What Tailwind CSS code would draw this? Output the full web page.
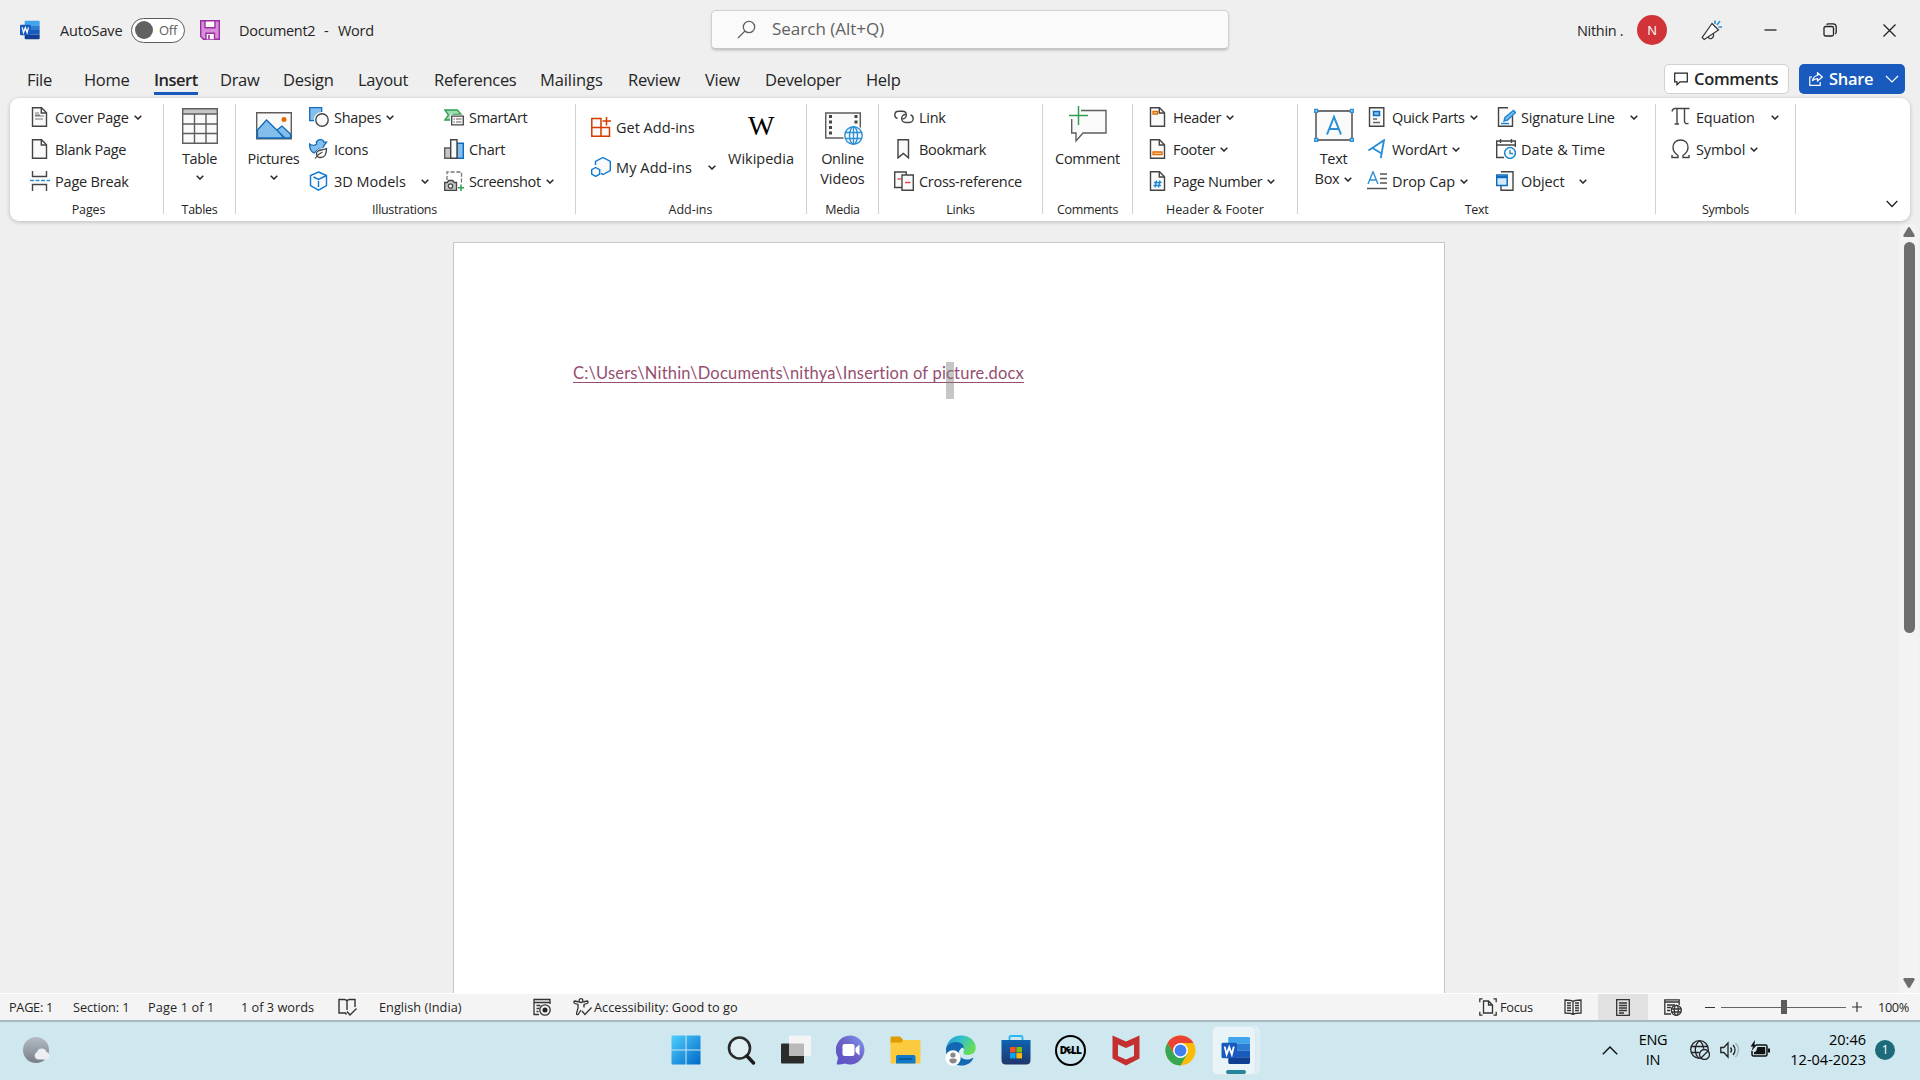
<!DOCTYPE html>
<html lang="en">
<head>
<meta charset="utf-8">
<title>Document2 - Word</title>
<script src="https://cdn.jsdelivr.net/npm/@tailwindcss/browser@4"></script>
</head>
<body class="w-[1920px] h-[1080px] overflow-hidden flex flex-col bg-[#efefef] font-['Open_Sans',sans-serif] text-[#252525] text-[14.5px] leading-5 tracking-[-0.3px] whitespace-nowrap">

<svg class="hidden">
  <symbol id="chev" viewBox="0 0 8 5"><path d="M.7.7 4 4 7.3.7" fill="none" stroke="#252525" stroke-width="1.5"/></symbol>
  <symbol id="page" viewBox="0 0 20 20"><path d="M2.5.8h9l5 5v13.4h-14z" fill="#fafafa" stroke="#444" stroke-width="1.4"/><path d="M11.3 1v5h5" fill="none" stroke="#444" stroke-width="1.4"/></symbol>
  <symbol id="word" viewBox="0 0 30 30">
    <path d="M8 1h20a1.5 1.5 0 0 1 1.500 1.500V8H7V2a1 1 0 0 1 1-1z" fill="#41a5ee"/><path d="M7 8h22.500v7H7z" fill="#2b7cd3"/><path d="M7 15h22.500v7H7z" fill="#185abd"/><path d="M7 22h22.500v5.500A1.500 1.500 0 0 1 28 29H8.500A1.500 1.500 0 0 1 7 27.500z" fill="#103f91"/>
    <rect x="0" y="7" width="16" height="16" rx="1.500" fill="#185abd"/><path d="m3.300 11 2 8L8 11.500l2.700 7.500 2-8" fill="none" stroke="#fff" stroke-width="1.900"/></symbol>
</svg>

<!-- Title bar -->
<header class="h-15 shrink-0 flex items-center relative">
  <svg class="ml-5 size-5"><use href="#word"/></svg>
  <span class="ml-5 w-[71px] pt-px tracking-[-0.1px]">AutoSave</span>
  <div class="w-[54px] h-[25px] rounded-full border border-[#5c5c5c] bg-white flex items-center pl-[3px] text-[#5c5c5c] text-[13px]"><i class="size-[18px] rounded-full bg-[#616161] mr-[6px]"></i><span>Off</span></div>
  <svg class="ml-[15px] size-5" viewBox="0 0 20 20"><path d="M.7.7h18.600v18.600H3.500L.7 16.500z" fill="#d98ddb" stroke="#9b2fa0" stroke-width="1.400"/><path d="M5 .7h10v7H5zM6 19.300v-6h8.500v6" fill="#fafafa" stroke="#9b2fa0" stroke-width="1.400"/><path d="M9 15v4" stroke="#9b2fa0" stroke-width="1.600"/></svg>
  <span class="ml-[19px] w-[85px] pt-px">Document2</span><span class="w-[14px] pt-px">-</span><span class="pt-px">Word</span>
  <div class="absolute left-[711px] top-[10px] w-[518px] h-10 rounded-[5px] bg-[#fafafa] border border-[#d0d0d0] border-b-2 border-b-[#c6c6c6] shadow-sm flex items-center pl-[25px] pb-px text-[#616161] text-[17px]">
    <svg class="size-[19px] mr-4" viewBox="0 0 19 19" fill="none" stroke="#616161" stroke-width="1.300"><circle cx="12" cy="7" r="5.700"/><path d="m8 11-7 7"/></svg><span class="tracking-[0px]">Search (Alt+Q)</span>
  </div>
  <span class="ml-auto w-[60px] pt-px">Nithin .</span>
  <div class="size-[30px] rounded-full bg-[#d13438] text-white text-[13px] flex items-center justify-center">N</div>
  <svg class="ml-[34px] size-[21px]" viewBox="0 0 21 21" fill="none" stroke="#333" stroke-width="1.200"><path d="M11 3.500 1.200 17.500l2 2L17.500 10z" fill="#fafafa"/><path d="m7 17.200 1.500 1.300c1.500.8 3.500-.5 4-2.500v-2.500"/><path d="M14 4V.5M16 5l3-4M17.500 7h3.500M14.500 3l-1-2" stroke="#2b8fd6" stroke-width="1.500"/></svg>
  <svg class="ml-[42px] size-[13px]" viewBox="0 0 13 13"><path d="M.5 6h12" stroke="#222" stroke-width="1.300"/></svg>
  <svg class="ml-[46px] size-[14px]" viewBox="0 0 14 14" fill="none" stroke="#222" stroke-width="1.300"><rect x="1" y="3.500" width="9.500" height="9.500" rx="1.500"/><path d="M3.500 1.500C4 1 4.500.8 5.500.8H10A3.200 3.200 0 0 1 13.200 4v5c0 1-.2 1.500-1 2"/></svg>
  <svg class="ml-[46px] mr-6 size-[13px]" viewBox="0 0 13 13"><path d="m.5.5 12 12m0-12-12 12" stroke="#222" stroke-width="1.300"/></svg>
</header>

<!-- Ribbon tabs -->
<nav class="h-[38px] shrink-0 flex items-start pl-[27px] pt-[8px] text-[16.5px] leading-6">
  <span class="w-[57px]">File</span><span class="w-[70px]">Home</span>
  <span class="w-[44px] mr-[22px] h-[27px] border-b-3 border-[#185abd] font-semibold tracking-[-0.5px]">Insert</span>
  <span class="w-[63px]">Draw</span><span class="w-[75px]">Design</span><span class="w-[76px]">Layout</span><span class="w-[106px]">References</span><span class="w-[88px] tracking-[-0.1px]">Mailings</span><span class="w-[77px]">Review</span><span class="w-[60px]">View</span><span class="w-[101px]">Developer</span><span>Help</span>
  <div class="-mt-1 ml-auto w-[125px] h-[30px] rounded-[5px] border border-[#d1d1d1] bg-white flex items-center pl-[9px] font-semibold">
    <svg class="size-[14px] mr-[6px]" viewBox="0 0 14 14"><path d="M.7 1.200h12.600v8.600H6L3 12.800v-3H.7z" fill="none" stroke="#222" stroke-width="1.200"/></svg><span>Comments</span></div>
  <div class="-mt-1 ml-[10px] mr-[15px] w-[106px] h-[30px] rounded-[5px] bg-[#185abd] text-white flex items-center pl-[10px] font-semibold">
    <svg class="size-[14px] mr-[6px]" viewBox="0 0 14 14" fill="none" stroke="#fff" stroke-width="1.200"><path d="M3 5H.8v8.300h10.400V10M8.500.8 13.300 5 8.500 9V6.700C6 6.700 4.500 7.500 3.500 9c.3-3 2-5 5-5.500z"/></svg><span class="w-[56px]">Share</span>
    <svg class="w-[14px] h-2" viewBox="0 0 14 8"><path d="m1 1 6 6 6-6" fill="none" stroke="#fff" stroke-width="1.200"/></svg></div>
</nav>

<!-- Ribbon -->
<section class="mx-[10px] h-[123px] shrink-0 rounded-[9px] bg-white shadow-[0_1px_4px_rgba(0,0,0,0.22)] flex relative [&_.h-8_span]:pt-[2px] [&_.h-10_span]:pt-[2px]">
  <div class="w-[153px] pt-[3px]">
    <div class="h-24 pl-5 flex flex-col">
      <div class="h-8 flex items-center gap-[5px]"><svg class="size-5" viewBox="0 0 20 20"><use href="#page"/><path d="M5 6h4M5 9h9M5 12h8M5 8h5" stroke="#777" stroke-width="1.200"/></svg><span class="tracking-[-0.2px]">Cover Page</span><svg class="w-2 h-[5px]"><use href="#chev"/></svg></div>
      <div class="h-8 flex items-center gap-[5px]"><svg class="size-5"><use href="#page"/></svg><span>Blank Page</span></div>
      <div class="h-8 flex items-center gap-[5px]"><svg class="size-5" viewBox="0 0 20 20" fill="#fafafa" stroke="#444" stroke-width="1.400"><path d="M2.500 0v5.500h14V0M2.500 20v-6.500h14V20"/><path d="M0 9.500h20" stroke="#2b8fd6" stroke-dasharray="4 1.500"/></svg><span class="tracking-[-0.2px]">Page Break</span></div>
    </div>
    <div class="h-6 leading-[26px] text-center text-[12.500px] pl-[4px]"><span class="tracking-[-0.1px]">Pages</span></div>
  </div>
  <i class="w-px h-[110px] mt-[6px] bg-[#d1d1d1]"></i>
  <div class="w-[71px] pt-[3px]">
    <div class="h-24 flex flex-col items-center pt-[7px]"><svg class="size-9" viewBox="0 0 36 36"><path d="M.7.700h34.600v34.600H.7z" fill="#fafafa"/><path d="M.7.700h34.600V6H.7z" fill="#c8c6c4"/><path d="M.7.700h34.600v34.600H.7zM.7 6h34.600M.7 16h34.600M.7 25.500h34.600M12.500 6v29M24 6v29" fill="none" stroke="#605e5c" stroke-width="1.400"/></svg><span class="mt-[5px]">Table</span><svg class="mt-[6px] w-2 h-[5px]"><use href="#chev"/></svg></div>
    <div class="h-6 leading-[26px] text-center text-[12.500px]"><span>Tables</span></div>
  </div>
  <i class="w-px h-[110px] mt-[6px] bg-[#d1d1d1]"></i>
  <div class="w-[339px] pt-[3px]">
    <div class="h-24 flex">
      <div class="w-[73px] pl-[2px] flex flex-col items-center pt-[7px]"><svg class="size-9" viewBox="0 0 36 36"><path d="M.7 4.700h34.600v26H.7z" fill="#fafafa" stroke="#605e5c" stroke-width="1.400"/><path d="M1.500 22 10.500 12 29 30H1.500zM21 22l5-4 8.500 8v4H28z" fill="#83beec" stroke="#0f6cbd" stroke-width="1.300"/><circle cx="28" cy="11.500" r="2.500" fill="#e36b00"/></svg><span class="mt-[5px]">Pictures</span><svg class="mt-[6px] w-2 h-[5px]"><use href="#chev"/></svg></div>
      <div class="w-[135px] flex flex-col">
        <div class="h-8 flex items-center gap-[5px]"><svg class="size-5" viewBox="0 0 20 20"><path d="M.7.700h12v13h-12z" fill="#83beec" stroke="#0f6cbd" stroke-width="1.300"/><circle cx="13" cy="13" r="8" fill="#fff"/><circle cx="13" cy="13" r="6.200" fill="#fafafa" stroke="#444" stroke-width="1.400"/></svg><span>Shapes</span><svg class="w-2 h-[5px]"><use href="#chev"/></svg></div>
        <div class="h-8 flex items-center gap-[5px]"><svg class="size-5" viewBox="0 0 20 20"><path d="M.7 5c2 1.500 5 1.500 7 0C6.500 2.500 9 .700 11.500.700c2 0 3 1 3.500 2.500h2.500L15 6.500C15 9 12 10 10 10l-5 4C1.500 12.500.500 9 .700 5z" fill="#83beec" stroke="#0f6cbd" stroke-width="1.300"/><path d="M18.500 9.500c0 6-2 9-6 9-2 0-4-1-4-3.500 0-5 5-3 10-5.500z" fill="#fafafa" stroke="#fff" stroke-width="3.500"/><path d="M17.500 9.500c0 6-1.500 9-6 9-2 0-4-1-4-3.500 0-5 5-3 10-5.500zM6 19.500c2-3 4-5 7.500-6.500" fill="#fafafa" stroke="#444" stroke-width="1.300"/></svg><span>Icons</span></div>
        <div class="h-8 flex items-center gap-[5px]"><svg class="size-5" viewBox="0 0 20 20" fill="none" stroke="#0f78d4" stroke-width="1.400"><path d="m9.500 1 8 3.500v10l-8 4.700-8-4.700v-10z" fill="#fafafa"/><path d="m4.500 6 5 2.500 8-4M9.500 10v6"/></svg><span class="tracking-[0px]">3D Models</span><svg class="ml-[10px] w-2 h-[5px]"><use href="#chev"/></svg></div>
      </div>
      <div class="flex flex-col">
        <div class="h-8 flex items-center gap-[5px]"><svg class="size-5" viewBox="0 0 20 20"><path d="M.8 3h12.500l4 4.500h-8L8 13H.8L4.500 8z" fill="#a1dbb4" stroke="#2e9e4f" stroke-width="1.300"/><path d="M7.700 9.200h11.600v8.600H7.700z" fill="#fafafa" stroke="#fff" stroke-width="3"/><path d="M7.700 9.200h11.600v8.600H7.700z" fill="#fafafa" stroke="#444" stroke-width="1.300"/><path d="M9.500 12h1.500m1 0h5.500M9.500 15h1.500m1 0h5.500" stroke="#666"/></svg><span>SmartArt</span></div>
        <div class="h-8 flex items-center gap-[5px]"><svg class="size-5" viewBox="0 0 20 20" stroke-width="1.400"><path d="M.7 9h6v10.300h-6z" fill="#c8c6c4" stroke="#605e5c"/><path d="M13 4.200h6.300v15.100H13z" fill="#83beec" stroke="#0f6cbd"/><path d="M6.700.700H13v18.600H6.700z" fill="#fafafa" stroke="#444"/></svg><span class="tracking-[-0.2px]">Chart</span></div>
        <div class="h-8 flex items-center gap-[5px]"><svg class="size-5" viewBox="0 0 20 20" fill="none"><path d="M3 9V1h14.500v11" stroke="#777" stroke-width="1.300" stroke-dasharray="4 1.800"/><path d="M.7 11.500h2.500l1.500-2h4l1.500 2h2.300v7.800H.7z" fill="#c8c6c4" stroke="#444" stroke-width="1.300"/><circle cx="6.500" cy="15" r="2.200" fill="#fafafa" stroke="#444" stroke-width="1.300"/><path d="M17 13.500v6.500M13.800 16.700H20" stroke="#2e9e4f" stroke-width="1.500"/></svg><span class="tracking-[-0.4px]">Screenshot</span><svg class="w-2 h-[5px]"><use href="#chev"/></svg></div>
      </div>
    </div>
    <div class="h-6 leading-[26px] text-center text-[12.500px] pr-[2px]"><span>Illustrations</span></div>
  </div>
  <i class="w-px h-[110px] mt-[6px] bg-[#d1d1d1]"></i>
  <div class="w-[230px] pt-[3px]">
    <div class="h-24 flex pl-[15px]">
      <div class="w-[135px] flex flex-col pt-[6px]">
        <div class="h-10 flex items-center gap-[5px]"><svg class="size-5" viewBox="0 0 20 20" fill="#fafafa" stroke="#d83b01" stroke-width="1.500"><path d="M.8 1.500H10v9H.8zM.8 10.500H10v8.700H.8zM10 10.500h8.500v8.700H10z"/><path d="M15.500 0v8.500M11.500 4H20"/></svg><span class="tracking-[0px]">Get Add-ins</span></div>
        <div class="h-10 flex items-center gap-[5px]"><svg class="size-5" viewBox="0 0 20 20" fill="#fafafa" stroke="#0f78d4" stroke-width="1.400"><path d="M4.500 8V4.500l7.500-4 7.300 4v9l-7.300 4-2-1"/><path d="m4.700 10.500 4 2.200v4.500l-4 2.200-4-2.200v-4.500z"/></svg><span class="tracking-[0.1px]">My Add-ins</span><svg class="ml-[11px] w-2 h-[5px]"><use href="#chev"/></svg></div>
      </div>
      <div class="w-[70px] flex flex-col items-center pt-[7px]"><span class="h-9 leading-[36px] text-[28px] text-black font-['Liberation_Serif',serif]">W</span><span class="mt-[5px] tracking-[0px]">Wikipedia</span></div>
    </div>
    <div class="h-6 leading-[26px] text-center text-[12.500px] pr-px"><span class="tracking-[0px]">Add-ins</span></div>
  </div>
  <i class="w-px h-[110px] mt-[6px] bg-[#d1d1d1]"></i>
  <div class="w-[71px] pt-[3px]">
    <div class="h-24 flex flex-col items-center pt-[9px]"><svg class="ml-[3px] w-[38px] h-[35px]" viewBox="0 0 38 35"><path d="M.7 3h34.600v25H.7z" fill="#fafafa" stroke="#605e5c" stroke-width="1.500"/><path d="M5.500 5v22M31 5v12" stroke="#444" stroke-width="3" stroke-dasharray="3 2.500"/><circle cx="28.500" cy="25.500" r="10.500" fill="#fff"/><g fill="none" stroke="#2b8fd6" stroke-width="1.400"><circle cx="28.500" cy="25.500" r="8.700" fill="#fafafa"/><ellipse cx="28.500" cy="25.500" rx="4" ry="8.700"/><path d="M28.500 17v17M20.500 22.500h16M20.500 28.500h16"/></g></svg><span class="mt-1">Online</span><span class="tracking-[-0.1px]">Videos</span></div>
    <div class="h-6 leading-[26px] text-center text-[12.500px]"><span>Media</span></div>
  </div>
  <i class="w-px h-[110px] mt-[6px] bg-[#d1d1d1]"></i>
  <div class="w-[163px] pt-[3px]">
    <div class="h-24 pl-[15px] flex flex-col">
      <div class="h-8 flex items-center gap-[5px]"><svg class="size-5" viewBox="0 0 20 20" fill="none" stroke="#444" stroke-width="1.400"><path d="M3.500 11.500C1.500 11 .800 9.500.800 8c0-2 1.500-3.700 4-3.700h3.500c2.500 0 4 1.700 4 3.700s-1.500 4-4 4"/><path d="M16.500 8c2 .500 2.700 2 2.700 3.500 0 2-1.500 4-4 4h-3.500c-2.500 0-4-2-4-4s1.500-4 4-4"/></svg><span>Link</span></div>
      <div class="h-8 flex items-center gap-[5px]"><svg class="size-5" viewBox="0 0 20 20"><path d="M4 .700h10.500v18.200L9.300 14.500 4 18.900z" fill="#fafafa" stroke="#444" stroke-width="1.400"/></svg><span>Bookmark</span></div>
      <div class="h-8 flex items-center gap-[5px]"><svg class="size-5" viewBox="0 0 20 20"><path d="M.7 1h11.500v15.500H.7z" fill="#fafafa" stroke="#444" stroke-width="1.400"/><path d="M3.500 8h3.500" stroke="#e8484a" stroke-width="1.400"/><path d="M8 4h11.300v15.300H8z" fill="#fafafa" stroke="#444" stroke-width="1.400"/><path d="M11 11.500h5.500" stroke="#e8484a" stroke-width="1.500"/></svg><span>Cross-reference</span></div>
    </div>
    <div class="h-6 leading-[26px] text-center text-[12.500px]"><span>Links</span></div>
  </div>
  <i class="w-px h-[110px] mt-[6px] bg-[#d1d1d1]"></i>
  <div class="w-[89px] pt-[3px]">
    <div class="h-24 flex flex-col items-center pt-[5px]"><svg class="w-[38px] h-[38px]" viewBox="0 0 38 38" fill="none"><path d="M12 4.500h25v22.500H14l-7 8V27H2.700V13" fill="#fafafa" stroke="#605e5c" stroke-width="1.400"/><path d="M9.500 0v19M0 9.500h19" stroke="#fff" stroke-width="4"/><path d="M9.500 0v19M0 9.500h19" stroke="#2e9e4f" stroke-width="1.500"/></svg><span class="mt-[5px]">Comment</span></div>
    <div class="h-6 leading-[26px] text-center text-[12.500px]"><span>Comments</span></div>
  </div>
  <i class="w-px h-[110px] mt-[6px] bg-[#d1d1d1]"></i>
  <div class="w-[164px] pt-[3px]">
    <div class="h-24 pl-[15px] flex flex-col">
      <div class="h-8 flex items-center gap-[5px]"><svg class="size-5" viewBox="0 0 20 20"><use href="#page"/><path d="M5 4.500h4.500v2.500H5z" fill="#fcd9b0" stroke="#e36b00" stroke-width="1.300"/></svg><span>Header</span><svg class="w-2 h-[5px]"><use href="#chev"/></svg></div>
      <div class="h-8 flex items-center gap-[5px]"><svg class="size-5" viewBox="0 0 20 20"><use href="#page"/><path d="M5 13h9v2.500H5z" fill="#fcd9b0" stroke="#e36b00" stroke-width="1.300"/></svg><span>Footer</span><svg class="w-2 h-[5px]"><use href="#chev"/></svg></div>
      <div class="h-8 flex items-center gap-[5px]"><svg class="size-5" viewBox="0 0 20 20"><use href="#page"/><path d="M8.500 9.500 7 16.500m5-7-1.500 7M6 11.500h7.500m-8 3H13" stroke="#1a86d0" stroke-width="1.300"/></svg><span>Page Number</span><svg class="w-2 h-[5px]"><use href="#chev"/></svg></div>
    </div>
    <div class="h-6 leading-[26px] text-center text-[12.500px]"><span class="tracking-[0.1px]">Header &amp; Footer</span></div>
  </div>
  <i class="w-px h-[110px] mt-[6px] bg-[#d1d1d1]"></i>
  <div class="w-[357px] pt-[3px]">
    <div class="h-24 flex">
      <div class="w-[69px] pl-[2px] flex flex-col items-center pt-[5px]"><svg class="w-10 h-10" viewBox="0 0 40 40"><path d="M2 5h36v29H2z" fill="#fafafa" stroke="#444" stroke-width="1.400"/><g fill="#fff" stroke="#2b8fd6" stroke-width="1.500"><path d="M.8 3.500h2.800v2.800H.8zM36.500 3.500h2.800v2.800h-2.800zM.8 32.500h2.800v2.800H.8zM36.500 32.500h2.800v2.800h-2.800z"/><path d="m13 28.500 7-17.500 7 17.500M15 23h10" fill="none" stroke-width="2"/></g></svg><span class="mt-[3px]">Text</span><div class="flex items-center gap-[5px]"><span>Box</span><svg class="w-2 h-[5px]"><use href="#chev"/></svg></div></div>
      <div class="w-[129px] flex flex-col">
        <div class="h-8 flex items-center gap-[5px]"><svg class="size-5" viewBox="0 0 20 20"><path d="M2.500.700h14.300v18.600H2.500z" fill="#fafafa" stroke="#444" stroke-width="1.400"/><path d="M6.500 4.500h6v4h-6z" fill="#83beec" stroke="#0f6cbd" stroke-width="1.500"/><path d="M6 12h4M6 15.500h7" stroke="#666" stroke-width="1.700"/></svg><span class="tracking-[-0.4px]">Quick Parts</span><svg class="w-2 h-[5px]"><use href="#chev"/></svg></div>
        <div class="h-8 flex items-center gap-[5px]"><svg class="size-5" viewBox="0 0 20 20"><path d="M1.500 11.500 17 1.200l-3.200 18M5.500 9l9 5.500" fill="none" stroke="#2b8fd6" stroke-width="1.900"/></svg><span>WordArt</span><svg class="w-2 h-[5px]"><use href="#chev"/></svg></div>
        <div class="h-8 flex items-center gap-[5px]"><svg class="size-5" viewBox="0 0 20 20" fill="none"><path d="M1 13 6 .800 11 13M2.500 9h7" stroke="#2b8fd6" stroke-width="1.400"/><path d="M13 3h7M13 7.500h7M13 12h7M0 17.500h20" stroke="#555" stroke-width="1.500"/></svg><span class="tracking-[-0.1px]">Drop Cap</span><svg class="w-2 h-[5px]"><use href="#chev"/></svg></div>
      </div>
      <div class="flex flex-col">
        <div class="h-8 flex items-center gap-[5px]"><svg class="size-5" viewBox="0 0 20 20"><path d="M12 .700H2.500v18.600h14V9" fill="#fafafa" stroke="#444" stroke-width="1.400"/><path d="m8 14 1-3.500 8.500-7 2 2-8 7.500zM5 16.500h8" fill="#83beec" stroke="#1a86d0" stroke-width="1.400"/></svg><span class="tracking-[-0.2px]">Signature Line</span><svg class="ml-[10px] w-2 h-[5px]"><use href="#chev"/></svg></div>
        <div class="h-8 flex items-center gap-[5px]"><svg class="size-5" viewBox="0 0 20 20" fill="none"><path d="M8 18.500H.7V2h18.600v6M.7 6h18.600M4.500 0v4M15.500 0v4" stroke="#444" stroke-width="1.400"/><circle cx="14" cy="14" r="5.400" fill="#fafafa" stroke="#1a86d0" stroke-width="1.500"/><path d="M14 11v3.500h3" stroke="#1a86d0" stroke-width="1.300"/></svg><span class="tracking-[0.1px]">Date &amp; Time</span></div>
        <div class="h-8 flex items-center gap-[5px]"><svg class="size-5" viewBox="0 0 20 20"><path d="M5 .700h12v18.600H5V14.500" fill="#fafafa" stroke="#444" stroke-width="1.400"/><path d="M.7 4h10.500v10.500H.7z" fill="#d5eafa" stroke="#0f6cbd" stroke-width="1.500"/><path d="M.7 6h10.500" stroke="#0f6cbd" stroke-width="2.500"/></svg><span class="tracking-[-0.1px]">Object</span><svg class="ml-[10px] w-2 h-[5px]"><use href="#chev"/></svg></div>
      </div>
    </div>
    <div class="h-6 leading-[26px] text-center text-[12.500px]"><span>Text</span></div>
  </div>
  <i class="w-px h-[110px] mt-[6px] bg-[#d1d1d1]"></i>
  <div class="w-[139px] pt-[3px]">
    <div class="h-24 pl-[15px] flex flex-col">
      <div class="h-8 flex items-center gap-[5px]"><svg class="size-5" viewBox="0 0 20 20"><path d="M1 4.500C1.500 2 2.500 1.500 4 1.500h14.500M6 1.500v15.500M13.500 1.500V14c0 2.500 1.500 3 4 2.500M3.500 17H8" fill="none" stroke="#444" stroke-width="1.400"/></svg><span class="tracking-[-0.2px]">Equation</span><svg class="ml-[11px] w-2 h-[5px]"><use href="#chev"/></svg></div>
      <div class="h-8 flex items-center gap-[5px]"><svg class="size-5" viewBox="0 0 20 20"><path d="M1 16v2.500h6v-2C3.500 14 2 11.500 2 8.500 2 4 5 1 9.500 1S17 4 17 8.500c0 3-1.500 5.500-5 8v2h6V16" fill="none" stroke="#444" stroke-width="1.400"/></svg><span class="tracking-[-0.1px]">Symbol</span><svg class="w-2 h-[5px]"><use href="#chev"/></svg></div>
    </div>
    <div class="h-6 leading-[26px] text-center text-[12.500px]"><span>Symbols</span></div>
  </div>
  <i class="w-px h-[110px] mt-[6px] bg-[#d1d1d1]"></i>
  <svg class="ml-auto mr-[12px] mt-[102px] w-3 h-[8px]" viewBox="0 0 12 8"><path d="m.7 1 5.300 5.500L11.300 1" fill="none" stroke="#222" stroke-width="1.300"/></svg>
</section>

<!-- Document canvas -->
<main class="h-[773px] shrink-0 flex border-b border-white">
  <article class="ml-[453px] mt-[21px] w-[992px] border border-b-0 border-[#c6c6c6] bg-white pl-[119px] pt-[119px]">
    <span class="relative inline-block text-[16.500px] leading-[22px] tracking-[0.2px] text-[#954f72] font-['Lato',sans-serif] underline underline-offset-[3px] decoration-1">C:\Users\Nithin\Documents\nithya\Insertion of picture.docx<i class="absolute left-[373px] top-0 w-2 h-[37px] bg-[#808080]/45"></i></span>
  </article>
  <aside class="ml-auto mr-[1px] mt-[3px] w-[20px] rounded-t-lg bg-[#f3f3f3] flex flex-col items-center pt-[3px] pb-[5px]">
    <svg class="w-3 h-[10px]" viewBox="0 0 12 10"><path d="M6 0c.6 0 1 .5 1.300 1l4.200 7c.5 1 0 2-1 2h-9c-1 0-1.500-1-1-2l4.200-7c.3-.5.700-1 1.300-1z" fill="#6e6e6e"/></svg>
    <div class="mt-[5px] w-[11px] h-[391px] rounded-full bg-[#6e6e6e]"></div>
    <svg class="mt-auto w-3 h-[10px] rotate-180" viewBox="0 0 12 10"><path d="M6 0c.6 0 1 .5 1.300 1l4.200 7c.5 1 0 2-1 2h-9c-1 0-1.500-1-1-2l4.200-7c.3-.5.700-1 1.300-1z" fill="#6e6e6e"/></svg>
  </aside>
</main>

<!-- Status bar -->
<footer class="h-[26px] shrink-0 bg-[#f4f4f4] flex items-center pl-[9px] text-[12.750px] tracking-[0px]">
  <span class="w-16 tracking-[-0.3px]">PAGE: 1</span><span class="w-[75px] tracking-[-0.1px]">Section: 1</span><span class="w-[93px] tracking-[0.1px]">Page 1 of 1</span><span class="w-[97px]">1 of 3 words</span>
  <svg class="w-[19px] h-[18px] mr-[22px]" viewBox="0 0 19 18" fill="none" stroke="#333" stroke-width="1.400"><path d="M8.500 16.500 7.500 15H1V1.500h5.500c1.200 0 2 .500 2.500 1.500.500-1 1.300-1.500 2.500-1.500H17V9M9 3v9"/><path d="m9 13.500 3 3.500 6.500-6.500"/></svg>
  <span class="w-[154px]">English (India)</span>
  <svg class="w-[18px] h-[18px] mr-[22px]" viewBox="0 0 18 18" fill="none" stroke="#333" stroke-width="1.300"><path d="M6 16.500H1v-15h16V6M1 4.500h16M3.500 7.500h4M3.500 10.500h3M3.500 13.500h2"/><circle cx="12" cy="12" r="5.200"/><circle cx="12" cy="12" r="2.500" fill="#222" stroke="none"/></svg>
  <svg class="w-[19px] h-[18px] mr-[2px]" viewBox="0 0 19 18" fill="none" stroke="#333" stroke-width="1.300"><circle cx="8" cy="2.600" r="1.900"/><path d="M5.800 4 2 3C.500 3 .500 5 2 5.500l3 1V10l-1.500 5.500c0 1.500 1.500 1.500 2 .500L8 12M10.200 4 14 3c1.500 0 1.500 2 0 2.500l-3 1v3"/><path d="m9 13 3 3.500 6.500-7"/></svg>
  <span>Accessibility: Good to go</span>
  <svg class="ml-auto w-[18px] h-[18px] mr-[3px]" viewBox="0 0 18 18" fill="none" stroke="#333" stroke-width="1.300"><path d="M3.500.800H.800v3.500M14.500.800h2.700v3.500M3.500 17.200H.800v-3.500M14.500 17.200h2.700v-3.500M4.500 3h5l4 4v8h-9zM9.500 3v4h4"/></svg>
  <span class="w-16 tracking-[-0.3px]">Focus</span>
  <svg class="w-[18px] h-[16px] mr-4" viewBox="0 0 18 16" fill="none" stroke="#333" stroke-width="1.300"><path d="M9 2.500C7.500 1 5 1 1 1v13c4 0 6.500 0 8 1.500 1.500-1.500 4-1.500 8-1.500V1c-4 0-6.500 0-8 1.500zM9 2.500v13M3 4h4M3 6.500h4M3 9h4M3 11.500h4M11 4h4M11 6.500h4M11 9h4M11 11.500h4"/></svg>
  <div class="w-[50px] h-full bg-[#e1e1e1] flex items-center justify-center"><svg class="w-[14px] h-[17px]" viewBox="0 0 14 17" fill="none" stroke="#333" stroke-width="1.300"><path d="M.7.700h12.600v15.600H.7zM3 4h8M3 6.500h8M3 9h8M3 11.500h8M3 14h5"/></svg></div>
  <svg class="ml-4 w-[18px] h-[17px] mr-[23px]" viewBox="0 0 18 17" fill="none" stroke="#333" stroke-width="1.300"><path d="M7 15H.8V.800h14.400V6M.8 3h14.400M3 6h8M3 8.500h4M3 11.500h3"/><circle cx="12.300" cy="11.300" r="5"/><ellipse cx="12.300" cy="11.300" rx="2" ry="5"/><path d="M7.300 10h10M7.300 13h10"/></svg>
  <i class="w-[10px] h-px bg-[#333] mr-[6px]"></i>
  <div class="w-[125px] flex items-center relative"><i class="w-full h-px bg-[#666]"></i><i class="absolute left-[60px] w-[6px] h-[14px] bg-[#5c5c5c]"></i></div>
  <svg class="ml-[6px] size-[10px] mr-4" viewBox="0 0 10 10"><path d="M5 0v10M0 5h10" stroke="#333" stroke-width="1.200"/></svg>
  <span class="w-[42px] tracking-[-0.4px]">100%</span>
</footer>

<!-- Taskbar -->
<div class="h-[60px] shrink-0 bg-[#cfe7ee] border-t-2 border-[#a9b9c0] flex items-center pb-[2px]">
  <svg class="ml-[22px] size-7" viewBox="0 0 28 28"><defs><linearGradient id="m" x2="0" y2="1"><stop stop-color="#b4bcc6"/><stop offset="1" stop-color="#777e86"/></linearGradient></defs><circle cx="14" cy="14" r="13" fill="url(#m)"/><path d="M15.500 23.500a4 4 0 0 1-.5-7.500 5 5 0 0 1 9.500 0c4 1 4 7.500 0 7.500z" fill="#eceef2"/></svg>
  <div class="ml-[608px] flex">
    <div class="w-[55px] flex justify-center items-center"><svg class="size-[30px]" viewBox="0 0 30 30"><defs><linearGradient id="wn" x2="1" y2="1"><stop stop-color="#4fd0ff"/><stop offset="1" stop-color="#0067c8"/></linearGradient></defs><path d="M1 .5h13.500v14H.5V1zM15.500.5H29l.5.5v13.500h-14zM.5 15.500h14v14H1l-.5-.5zM15.500 15.500h14V29l-.5.5H15.500z" fill="url(#wn)"/></svg></div>
    <div class="w-[55px] flex justify-center items-center pl-px"><svg class="size-[29px]" viewBox="0 0 29 29"><circle cx="12.500" cy="12" r="10.500" fill="#dfeff4" stroke="#2a2a2a" stroke-width="2.600"/><path d="m20 20 6.500 7" stroke="#1c1c1c" stroke-width="3.400" stroke-linecap="round"/></svg></div>
    <div class="w-[55px] flex justify-center items-center"><svg class="size-[30px]" viewBox="0 0 30 30"><rect y="8.500" width="23" height="20" rx="1" fill="#2b2b2b"/><rect x="8" y=".5" width="22" height="20.500" rx="1" fill="#f4f4f4"/><path d="M8 8.500h15v12.500H9a1 1 0 0 1-1-1z" fill="#b9b9b9"/></svg></div>
    <div class="w-[55px] flex justify-center items-center"><svg class="size-[30px]" viewBox="0 0 30 30"><defs><linearGradient id="ch" x1="1" x2="0" y2="1"><stop stop-color="#7f9df5"/><stop offset=".5" stop-color="#6b5fc4"/><stop offset="1" stop-color="#5a52c8"/></linearGradient></defs><path d="M15 .500A14.500 14.500 0 1 1 9 28.600C6 29.500 3 29.700 1 29.500c-.7-1 .5-2.500 1-7A14.500 14.500 0 0 1 15 .500z" fill="url(#ch)"/><rect x="6.500" y="9" width="12" height="12" rx="2" fill="#fff"/><path d="m19.500 13 4-3.500v11l-4-3.500z" fill="#fff"/></svg></div>
    <div class="w-[55px] flex justify-center items-center"><svg class="w-[31px] h-7" viewBox="0 0 31 28"><path d="M.5 2C.5 1 1 .5 2 .5h8l3 3v5H.5z" fill="#e09b00"/><path d="M.5 6.500h11l2-2.500h15.500c1 0 1.500.5 1.500 1.500v21c0 .5-.5 1-1 1h-28c-.5 0-1-.5-1-1z" fill="#fcca3f"/><path d="M6 21c0-1.500 1-2 2-2h15c1.500 0 2.500.5 2.500 2v6.500H6z" fill="#0f78c8"/><path d="M9 23h13" stroke="#0b4f8f" stroke-width="1.500"/></svg></div>
    <div class="w-[55px] flex justify-center items-center"><svg class="size-[31px]" viewBox="0 0 31 31"><defs><linearGradient id="eg" x2="1" y2=".5"><stop stop-color="#1b8fd8"/><stop offset=".5" stop-color="#35c1c9"/><stop offset="1" stop-color="#66dd55"/></linearGradient></defs><path d="M1 14C2 6 8 .5 16 .5c9 0 15 6 14.700 12.500-.3 5-4 7-8 7-3 0-5-1-4.500-2.500C20 14 17 10.500 12.500 10.500 7 10.500 2 13 1 20z" fill="url(#eg)"/><path d="M1 15c0-5 5-8 10.500-8 5 0 8.500 4 6.500 6.500-4-1-7 7 1 10.500 4 1.500 7 0 9.500-1.500C27 28 21 31 15.500 30.500 7 30 1 24 1 15z" fill="#1268b3"/><path d="M18 13.500c-1.500 2-2 4-.5 6" stroke="#d9f0f4" stroke-width="3" fill="none"/><circle cx="8" cy="23" r="7.700" fill="#fff"/><circle cx="8" cy="20" r="2.600" fill="#888"/><path d="M4.300 25c0-2 7.500-2 7.500 0s-1.500 3.500-3.700 3.500S4.300 27 4.300 25z" fill="#888"/></svg></div>
    <div class="w-[55px] flex justify-center items-center"><svg class="size-[30px]" viewBox="0 0 30 30"><defs><linearGradient id="st" x2="0" y2="1"><stop stop-color="#0d64b0"/><stop offset="1" stop-color="#20356b"/></linearGradient></defs><path d="M8.500 7V2.500C8.500 1.500 9 1 10 1h10c1 0 1.500.5 1.500 1.500V7" fill="none" stroke="#2bb7f5" stroke-width="1.800"/><path d="M.5 5h29v20c0 3-1.500 4.500-4.500 4.500H5C2 29.500.5 28 .5 25z" fill="url(#st)"/><path fill="#f35325" d="M9 12h5.600v5.400H9z"/><path fill="#81bc06" d="M15.400 12H21v5.400h-5.600z"/><path fill="#05a6f0" d="M9 18h5.600v5.400H9z"/><path fill="#ffba08" d="M15.400 18H21v5.400h-5.600z"/></svg></div>
    <div class="w-[55px] flex justify-center items-center"><div class="size-[31px] rounded-full border-2 border-black flex items-center justify-center text-black text-[10px] font-extrabold tracking-[-0.8px]">D<span class="-rotate-30">E</span>LL</div></div>
    <div class="w-[55px] flex justify-center items-center"><svg class="w-7 h-[31px]" viewBox="0 0 28 31"><path d="m.5.500 13.500 6 13.500-6v23L14 30.500.500 23.500zM6 9.500V21l8 3.500 8-3.500V9.500l-8 3.500z" fill="#c4302f" fill-rule="evenodd"/></svg></div>
    <div class="w-[55px] flex justify-center items-center"><svg class="size-[31px]" viewBox="0 0 31 31"><circle cx="15.500" cy="15.500" r="15" fill="#fbbc05"/><path d="M2.500 8A15 15 0 0 1 28.500 8H15.500l-6.500 11z" fill="#ea4335"/><path d="M2.500 8a15 15 0 0 0 13 22.500L22 19.200H9z" fill="#34a853"/><circle cx="15.500" cy="15.500" r="7.400" fill="#fff"/><circle cx="15.500" cy="15.500" r="5.900" fill="#3f7fee"/></svg></div>
    <div class="w-[55px] flex items-center relative"><i class="absolute left-[8px] w-[44px] h-12 rounded-[5px] border border-[#e2f1f5] bg-[#dceef3]"></i><div class="relative ml-[4px] w-[44px] h-[49px] rounded-[5px] bg-[#e9f4f8] border border-[#dbe9ee] flex flex-col items-center pl-[3px]"><svg class="mt-[9px] size-[30px]"><use href="#word"/></svg><i class="mt-[5px] w-5 h-1 shrink-0 rounded-full bg-[#25859a]"></i></div></div>
  </div>
  <svg class="ml-auto w-4 h-[9px] mr-[20px]" viewBox="0 0 16 9"><path d="M.8 8.300 8 1l7.200 7.300" fill="none" stroke="#111" stroke-width="1.400"/></svg>
  <div class="w-[30px] text-center text-black mr-[22px]"><span>ENG</span><br><span>IN</span></div>
  <svg class="size-5 mr-[10px]" viewBox="0 0 20 20" fill="none" stroke="#222" stroke-width="1.300"><circle cx="9.500" cy="9.500" r="8.800"/><path d="M9 18.300C4 14 4 5 9.500.800c2.500 2 4 5 4 8M1.500 6.500h16M1.500 12.500H9"/><circle cx="14.500" cy="14.500" r="5" fill="#cfe7ee"/><path d="m11 18 7-7"/></svg>
  <svg class="size-5 mr-[10px]" viewBox="0 0 20 20" fill="none" stroke="#222" stroke-width="1.300"><path d="M.8 7.500h3L8 3v14l-4.200-4.500h-3z"/><path d="M10.500 7.500c1.300 1.500 1.300 3.500 0 5M13 5c2.700 2.800 2.700 7.200 0 10"/><path d="M15.500 3c4 4 4 10 0 14" stroke="#9bb0b6"/></svg>
  <svg class="size-5 mr-5" viewBox="0 0 20 20"><path d="M6 5h9.500A1.500 1.500 0 0 1 17 6.500v8a1.500 1.500 0 0 1-1.500 1.500h-12A1.500 1.500 0 0 1 2 14.500V11" fill="none" stroke="#111" stroke-width="1.500"/><path d="M7.500 7h7.700v7.300H4V12l2-.5zM18 8.500h2v4h-2z" fill="#111"/><path d="M5 0 .500 6.500h2.500L1.500 11 7 4.800H4.500z" fill="#111"/></svg>
  <div class="w-[76px] text-right text-black mr-[9px] tracking-[0px]"><span>20:46</span><br><span>12-04-2023</span></div>
  <div class="size-5 mr-[25px] rounded-full bg-[#1c6a7a] text-white text-[12px] flex items-center justify-center">1</div>
</div>
</body>
</html>
